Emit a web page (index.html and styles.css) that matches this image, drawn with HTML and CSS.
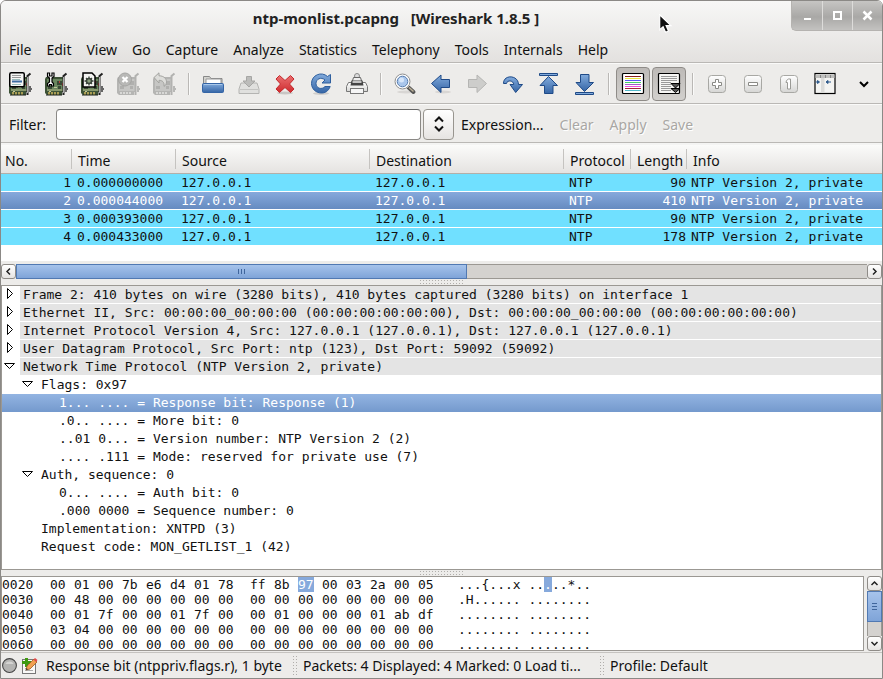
FILE: index.html
```html
<!DOCTYPE html>
<html lang="en">
<head>
  <meta charset="UTF-8" />
  <meta name="viewport" content="width=device-width, initial-scale=1.0" />
  <title>ntp-monlist.pcapng [Wireshark 1.8.5 ]</title>
  <link rel="stylesheet" href="styles.css">
</head>
<body>
  <!-- shared icon parts -->
  <svg class="defs" aria-hidden="true">
    <defs>
      <linearGradient id="blue" x1="0" y1="0" x2="0" y2="1">
        <stop offset="0" stop-color="#82abdc" />
        <stop offset="1" stop-color="#3565a6" />
      </linearGradient>
      <linearGradient id="red" x1="0" y1="0" x2="0" y2="1">
        <stop offset="0" stop-color="#ea7070" />
        <stop offset="1" stop-color="#cf2b2f" />
      </linearGradient>
      <linearGradient id="metal" x1="0" y1="0" x2="0" y2="1">
        <stop offset="0" stop-color="#ffffff" />
        <stop offset="1" stop-color="#d6d6d4" />
      </linearGradient>
      <symbol id="nic" viewBox="0 0 24 24">
        <path d="M1 5h18v15h-2v3H2l-2-2V7z" fill="#3c5236" />
        <path d="M2 7h16v12H2z" fill="#6a875f" />
        <path d="M2 17h16v2H2z" fill="#87986c" />
        <path d="M12 9h5v4h-5zM3 14h4v3H3zM13 14h3v3h-3z" fill="#3a4a36" />
        <path d="M14 9h1v2h-1zM17 11h1v3h-1z" fill="#b8423c" />
        <path d="M9 15h3v1H9zM4 19h2v1H4z" fill="#c3c79a" />
        <path d="M3 20h2v3H3zM6 20h2v3H6zM9 20h2v3H9zM12 20h2v3h-2z" fill="#a99d55" />
        <path d="M1 22.500h16v1H1z" fill="#1b2018" />
        <path d="M18.500 23V4l3-2.500" fill="none" stroke="#222" stroke-width="2" />
        <path d="M18.500 21V5" stroke="#aaa" stroke-width="1" />
        <path d="M20 17h3M21 14v6" stroke="#666" stroke-width="2" />
      </symbol>
      <symbol id="nic-off" viewBox="0 0 24 24">
        <path d="M1 5h18v15h-2v3H2l-2-2V7z" fill="#b5b5b3" />
        <path d="M2 7h16v12H2z" fill="#c6c6c4" />
        <path d="M12 9h5v4h-5zM3 14h4v3H3zM13 14h3v3h-3z" fill="#b0b0ae" />
        <path d="M3 20h2v2H3zM6 20h2v2H6zM9 20h2v2H9zM12 20h2v2h-2z" fill="#d8d8d6" />
        <path d="M18.500 23V4l3-2.500" fill="none" stroke="#b2b2b0" stroke-width="2" />
        <path d="M20 17h3M21 14v6" stroke="#b8b8b6" stroke-width="2" />
      </symbol>
    </defs>
  </svg>

  <div class="window">
    <header class="chrome">
      <div class="titlebar">
        <h1>ntp-monlist.pcapng &nbsp; [Wireshark 1.8.5 ]</h1>
        <div class="window-buttons">
          <button type="button" aria-label="Minimize"><svg width="11" height="11"><path d="M2 9h7" stroke="#fff" stroke-width="2" /></svg></button>
          <button type="button" aria-label="Maximize"><svg width="11" height="11"><path d="M2 2h7v7H2z" fill="none" stroke="#fff" stroke-width="2" /></svg></button>
          <button type="button" aria-label="Close"><svg width="11" height="11"><path d="M1.500 1.500l8 8M9.500 1.500l-8 8" stroke="#fff" stroke-width="2.500" /></svg></button>
        </div>
        <svg class="cursor" width="14" height="20" viewBox="0 0 14 20" aria-hidden="true"><path d="M.7.7v15l3.400-3 2.400 5.600 3-1.300-2.400-5.400h4.800z" fill="#111" stroke="#fff" stroke-width="1.200" /></svg>
      </div>
      <nav class="menubar">
        <a href="#">File</a>
        <a href="#">Edit</a>
        <a href="#">View</a>
        <a href="#">Go</a>
        <a href="#">Capture</a>
        <a href="#">Analyze</a>
        <a href="#">Statistics</a>
        <a href="#">Telephony</a>
        <a href="#">Tools</a>
        <a href="#">Internals</a>
        <a href="#">Help</a>
      </nav>
    </header>

    <div class="toolbar" role="toolbar" aria-label="Main toolbar">
      <button type="button" aria-label="List interfaces">
        <svg viewBox="0 0 24 24"><use href="#nic" /><rect x=".75" y=".75" width="14.500" height="14" rx="1.500" fill="#f6f6f4" stroke="#000" stroke-width="1.500" /><path d="M3 3.500h9M3 5.500h9" stroke="#999" /><path d="M3 9.500h10" stroke="#3e6da3" stroke-width="2" /><path d="M3 7.500h8M3 12.500h9" stroke="#9bb" /></svg>
      </button>
      <button type="button" aria-label="Capture options">
        <svg viewBox="0 0 24 24"><use href="#nic" /><path d="M2.500 1v3.500l2 1.500v4l-2 1.500V14h2v-1.500h2V14h2v-2.500L7 10V6l2-1.500V1H7v3H4.500V1z" fill="#fff" stroke="#000" stroke-width="1.200" /></svg>
      </button>
      <button type="button" aria-label="Start capture">
        <svg viewBox="0 0 24 24"><use href="#nic" /><path d="M2 1h9l3 3v11H2z" fill="#f4f4f2" stroke="#000" stroke-width="1.500" /><path d="M8 4.500v9M3.500 9h9M5 6l6 6M11 6l-6 6" stroke="#3b453b" stroke-width="1.300" /><circle cx="8" cy="9" r="2.500" fill="#8ca080" stroke="#3b453b" stroke-width="1.500" /></svg>
      </button>
      <button type="button" aria-label="Stop capture" disabled>
        <svg viewBox="0 0 24 24"><use href="#nic-off" /><circle cx="8" cy="7.500" r="6.500" fill="#b8b8b6" stroke="#a5a5a3" /><path d="M5.500 5l5 5M10.500 5l-5 5" stroke="#fff" stroke-width="2.200" /></svg>
      </button>
      <button type="button" aria-label="Restart capture" disabled>
        <svg viewBox="0 0 24 24"><use href="#nic-off" /><path d="M1 5.500L6 .8v3c5 0 7.500 3 7.500 6 0 2-1 4-2.500 4.500.5-4-1.500-6-5-6V11z" fill="#ddddda" stroke="#a2a29f" /></svg>
      </button>
      <span class="separator"></span>
      <button type="button" aria-label="Open">
        <svg viewBox="0 0 24 24"><path d="M2.500 12V4.500h6l1.500 2h11V12" fill="#d4d4d0" stroke="#888" /><path d="M5 12V7h15v5" fill="#fff" stroke="#999" /><rect x="1.500" y="11.500" width="21" height="9" rx="1" fill="url(#blue)" stroke="#3565a6" /><path d="M3 12.500h18" stroke="#a9c8ea" /></svg>
      </button>
      <button type="button" aria-label="Save as" disabled>
        <svg viewBox="0 0 24 24"><path d="M4 11h16l2 6v4.500H2V17z" fill="#e0e0de" stroke="#b4b4b2" /><path d="M3 17.500h18" stroke="#c4c4c2" /><path d="M9.500 4.500h5V9h3.500l-6 6-6-6h3.500z" fill="#bcbcba" stroke="#a6a6a4" /></svg>
      </button>
      <button type="button" aria-label="Close file">
        <svg viewBox="0 0 24 24"><ellipse cx="12" cy="21" rx="8" ry="1.500" fill="#c8c6c4" /><path d="M6.500 3.500L12 8.500l5.500-5L21 7l-4.500 5 4.500 5-3.500 3.500-5.500-5-5.500 5L3 17l4.500-5L3 7z" fill="url(#red)" stroke="#c4282c" stroke-linejoin="round" /></svg>
      </button>
      <button type="button" aria-label="Reload">
        <svg viewBox="0 0 24 24"><ellipse cx="12" cy="21.500" rx="8" ry="1.500" fill="#cfcdcb" /><path d="M21.500 2.500V11h-8.500l3-3c-4-3.500-9-1-9 3.500 0 5 6 6.500 9 3h5.200c-2 5-5.200 6.500-8.700 6.500-6 0-10-4.500-10-9.500 0-8.500 10-12.500 16-7z" fill="url(#blue)" stroke="#2f5f9e" /></svg>
      </button>
      <button type="button" aria-label="Print">
        <svg viewBox="0 0 24 24"><circle cx="12" cy="4" r="2.500" fill="#ddd" stroke="#888" /><path d="M6.500 12l2-6.500h7l2 6.500" fill="#eee" stroke="#666" /><path d="M3.500 10.500h17l2 4v5h-21v-5z" fill="url(#metal)" stroke="#777" /><path d="M6.500 8.500h11l1 5h-13z" fill="#444" /><path d="M7.500 10h9M5 16h14" stroke="#eee" stroke-width="1.500" /><rect x="5.500" y="16.500" width="13" height="5" fill="#f6f6f6" stroke="#777" /></svg>
      </button>
      <span class="separator"></span>
      <button type="button" aria-label="Find packet">
        <svg viewBox="0 0 24 24"><ellipse cx="13" cy="20" rx="9" ry="1.500" fill="#d8d6d4" /><path d="M15 15l5.500 5" stroke="#555" stroke-width="4" stroke-linecap="round" /><path d="M16 15.500l4.500 4" stroke="#bbb098" stroke-width="1.500" /><circle cx="9.500" cy="9.500" r="6.500" fill="#a9c6ec" stroke="#fff" stroke-width="3" /><circle cx="9.500" cy="9.500" r="7.500" fill="none" stroke="#888" /><circle cx="9.500" cy="9.500" r="5.300" fill="none" stroke="#4d76ac" /><circle cx="8.500" cy="8" r="2.500" fill="#d8e7fa" /></svg>
      </button>
      <button type="button" aria-label="Go back">
        <svg viewBox="0 0 24 24"><ellipse cx="14" cy="20" rx="8" ry="1.500" fill="#d8d6d4" /><path d="M2.500 11.500l9.500-8.500v4.500h8.500v8H12v5z" fill="url(#blue)" stroke="#1f4a87" /></svg>
      </button>
      <button type="button" aria-label="Go forward" disabled>
        <svg viewBox="0 0 24 24"><path d="M21.500 11.500L12 3v4.500H3.500v8H12v5z" fill="#cdcdcb" stroke="#b5b5b3" /></svg>
      </button>
      <button type="button" aria-label="Go to packet">
        <svg viewBox="0 0 24 24"><path d="M2.500 11.500C2.500 2 17.500 3 17.500 12.500h4L14.700 20.500 9 12.500h3.700c0-4-6.500-5-7.200-1z" fill="url(#blue)" stroke="#1f4a87" /></svg>
      </button>
      <button type="button" aria-label="First packet">
        <svg viewBox="0 0 24 24"><path d="M2.500 1.500h18v2h-18z" fill="#82abdc" stroke="#1f4a87" /><path d="M11.500 4.500l9 9h-4.500v8H7.500v-8H3z" fill="url(#blue)" stroke="#1f4a87" /></svg>
      </button>
      <button type="button" aria-label="Last packet">
        <svg viewBox="0 0 24 24"><path d="M2.500 20.500h18v2h-18z" fill="#82abdc" stroke="#1f4a87" /><path d="M11.500 19.500l9-9h-4.500v-8H7.500v8H3z" fill="url(#blue)" stroke="#1f4a87" /></svg>
      </button>
      <span class="separator"></span>
      <button type="button" class="pressed" aria-pressed="true" aria-label="Colorize packet list">
        <svg viewBox="0 0 24 24"><rect x="1.500" y="1.500" width="21" height="20" rx="1" fill="#fff" stroke="#000" stroke-width="1.200" /><path d="M4 4.500h16" stroke="#8b2020" /><path d="M4 6.500h16" stroke="#e8e23c" /><path d="M4 8.500h16" stroke="#5a5af0" /><path d="M4 10.500h16" stroke="#46d066" /><path d="M4 12.500h16" stroke="#a060c8" /><path d="M4 14.500h16" stroke="#f050e0" /><path d="M4 16.500h16" stroke="#a02838" /><path d="M4 18.500h16" stroke="#50b8c8" /></svg>
      </button>
      <button type="button" class="pressed" aria-pressed="true" aria-label="Auto scroll">
        <svg viewBox="0 0 24 24"><rect x="1.500" y="1.500" width="21" height="20" rx="1" fill="#f6f6f4" stroke="#000" stroke-width="1.200" /><path d="M4 4.500h16M4 6.500h16M4 8.500h16M4 10.500h10M4 12.500h10M4 14.500h10M4 16.500h10M4 18.500h10" stroke="#999" /><path d="M14 11.500h9l-4.500 4.500zM14 16.500h9l-4.500 4z" fill="#555" stroke="#000" /></svg>
      </button>
      <span class="separator"></span>
      <button type="button" aria-label="Zoom in">
        <svg viewBox="0 0 24 24"><rect x="3.500" y="3.500" width="17" height="17" rx="3" fill="url(#metal)" stroke="#a8a8a4" /><path d="M10.500 7.500h3v3h3v3h-3v3h-3v-3h-3v-3h3z" fill="#fff" stroke="#8a8a86" /></svg>
      </button>
      <button type="button" aria-label="Zoom out">
        <svg viewBox="0 0 24 24"><rect x="3.500" y="3.500" width="17" height="17" rx="3" fill="url(#metal)" stroke="#a8a8a4" /><path d="M7.500 10.500h9v3h-9z" fill="#fff" stroke="#8a8a86" /></svg>
      </button>
      <button type="button" aria-label="Normal size">
        <svg viewBox="0 0 24 24"><rect x="3.500" y="3.500" width="17" height="17" rx="3" fill="url(#metal)" stroke="#a8a8a4" /><path d="M9.500 8.500l2-1.500h2v10h-3v-6.500h-1.500z" fill="#fff" stroke="#9a9a96" /></svg>
      </button>
      <button type="button" aria-label="Resize columns">
        <svg viewBox="0 0 24 24"><rect x="2" y="1.500" width="20" height="20" fill="#f4f4f2" stroke="#000" stroke-width="1.200" /><path d="M2.500 2.500h19V6h-19z" fill="#c0c0be" /><path d="M7.500 3v3M12.500 3v3M17.500 3v3" stroke="#888" /><path d="M8 6h3.500v15H8z" fill="#dcdcda" /><path d="M2.500 10h3M18 10h-3M4.500 8.500L6.500 10l-2 1.500zM15 8.500L13 10l2 1.500z" fill="#2f5a8c" stroke="#2f5a8c" /></svg>
      </button>
      <button type="button" class="overflow" aria-label="More tools">
        <svg viewBox="0 0 24 24"><path d="M8 10l4 4 4-4" fill="none" stroke="#000" stroke-width="2" /></svg>
      </button>
    </div>

    <form class="filterbar">
      <label for="filter">Filter:</label>
      <input type="text" id="filter" name="filter" />
      <button type="button" class="combo" aria-label="Recent filters">
        <svg width="12" height="16"><path d="M2 5.500l4-4 4 4M2 10.500l4 4 4-4" fill="none" stroke="#111" stroke-width="2" /></svg>
      </button>
      <button type="button" class="flat">Expression...</button>
      <button type="reset" class="flat" disabled>Clear</button>
      <button type="submit" class="flat" disabled>Apply</button>
      <button type="button" class="flat" disabled>Save</button>
    </form>

    <main class="panes">
      <section class="packets" aria-label="Packet list">
        <table>
          <colgroup>
            <col class="col-no" />
            <col class="col-time" />
            <col class="col-addr" />
            <col class="col-addr" />
            <col class="col-proto" />
            <col class="col-length" />
            <col />
          </colgroup>
          <thead>
            <tr><th>No.</th><th>Time</th><th>Source</th><th>Destination</th><th>Protocol</th><th>Length</th><th>Info</th></tr>
          </thead>
          <tbody>
            <tr><td class="num">1</td><td>0.000000000</td><td>127.0.0.1</td><td>127.0.0.1</td><td>NTP</td><td class="num">90</td><td>NTP Version 2, private</td></tr>
            <tr class="selected"><td class="num">2</td><td>0.000044000</td><td>127.0.0.1</td><td>127.0.0.1</td><td>NTP</td><td class="num">410</td><td>NTP Version 2, private</td></tr>
            <tr><td class="num">3</td><td>0.000393000</td><td>127.0.0.1</td><td>127.0.0.1</td><td>NTP</td><td class="num">90</td><td>NTP Version 2, private</td></tr>
            <tr><td class="num">4</td><td>0.000433000</td><td>127.0.0.1</td><td>127.0.0.1</td><td>NTP</td><td class="num">178</td><td>NTP Version 2, private</td></tr>
          </tbody>
        </table>
      </section>

      <div class="scroll-x">
        <button type="button" aria-label="Scroll left"><svg width="7" height="9"><path d="M5 1.500l-3 3 3 3" fill="none" stroke="#222" stroke-width="1.500" /></svg></button>
        <div class="track"><div class="thumb"><i></i><i></i><i></i></div></div>
        <button type="button" aria-label="Scroll right"><svg width="7" height="9"><path d="M2 1.500l3 3-3 3" fill="none" stroke="#222" stroke-width="1.500" /></svg></button>
      </div>
      <div class="handle"></div>

      <ul class="details">
        <li class="proto"><svg class="arrow"><path d="M5.500 2.500v10l5-5z" /></svg><span>Frame 2: 410 bytes on wire (3280 bits), 410 bytes captured (3280 bits) on interface 1</span></li>
        <li class="proto"><svg class="arrow"><path d="M5.500 2.500v10l5-5z" /></svg><span>Ethernet II, Src: 00:00:00_00:00:00 (00:00:00:00:00:00), Dst: 00:00:00_00:00:00 (00:00:00:00:00:00)</span></li>
        <li class="proto"><svg class="arrow"><path d="M5.500 2.500v10l5-5z" /></svg><span>Internet Protocol Version 4, Src: 127.0.0.1 (127.0.0.1), Dst: 127.0.0.1 (127.0.0.1)</span></li>
        <li class="proto"><svg class="arrow"><path d="M5.500 2.500v10l5-5z" /></svg><span>User Datagram Protocol, Src Port: ntp (123), Dst Port: 59092 (59092)</span></li>
        <li class="proto"><svg class="arrow"><path d="M2.500 5.500h10l-5 5z" /></svg><span>Network Time Protocol (NTP Version 2, private)</span></li>
        <li class="level-1"><svg class="arrow"><path d="M2.500 5.500h10l-5 5z" /></svg><span>Flags: 0x97</span></li>
        <li class="level-3 selected"><span>1... .... = Response bit: Response (1)</span></li>
        <li class="level-3"><span>.0.. .... = More bit: 0</span></li>
        <li class="level-3"><span>..01 0... = Version number: NTP Version 2 (2)</span></li>
        <li class="level-3"><span>.... .111 = Mode: reserved for private use (7)</span></li>
        <li class="level-1"><svg class="arrow"><path d="M2.500 5.500h10l-5 5z" /></svg><span>Auth, sequence: 0</span></li>
        <li class="level-3"><span>0... .... = Auth bit: 0</span></li>
        <li class="level-3"><span>.000 0000 = Sequence number: 0</span></li>
        <li class="level-2"><span>Implementation: XNTPD (3)</span></li>
        <li class="level-2"><span>Request code: MON_GETLIST_1 (42)</span></li>
      </ul>
      <div class="handle"></div>

      <section class="bytes" aria-label="Packet bytes">
        <div class="dump">
          <table>
            <tr><th>0020</th><td>00</td><td>01</td><td>00</td><td>7b</td><td>e6</td><td>d4</td><td>01</td><td class="mid">78</td><td>ff</td><td>8b</td><td><mark>97</mark></td><td>00</td><td>03</td><td>2a</td><td>00</td><td>05</td><td class="ascii">...{...x ..<mark>.</mark>..*..</td></tr>
            <tr><th>0030</th><td>00</td><td>48</td><td>00</td><td>00</td><td>00</td><td>00</td><td>00</td><td class="mid">00</td><td>00</td><td>00</td><td>00</td><td>00</td><td>00</td><td>00</td><td>00</td><td>00</td><td class="ascii">.H...... ........</td></tr>
            <tr><th>0040</th><td>00</td><td>01</td><td>7f</td><td>00</td><td>00</td><td>01</td><td>7f</td><td class="mid">00</td><td>00</td><td>01</td><td>00</td><td>00</td><td>00</td><td>01</td><td>ab</td><td>df</td><td class="ascii">........ ........</td></tr>
            <tr><th>0050</th><td>03</td><td>04</td><td>00</td><td>00</td><td>00</td><td>00</td><td>00</td><td class="mid">00</td><td>00</td><td>00</td><td>00</td><td>00</td><td>00</td><td>00</td><td>00</td><td>00</td><td class="ascii">........ ........</td></tr>
            <tr><th>0060</th><td>00</td><td>00</td><td>00</td><td>00</td><td>00</td><td>00</td><td>00</td><td class="mid">00</td><td>00</td><td>00</td><td>00</td><td>00</td><td>00</td><td>00</td><td>00</td><td>00</td><td class="ascii">........ ........</td></tr>
          </table>
        </div>
        <div class="scroll-y">
          <button type="button" aria-label="Scroll up"><svg width="9" height="7"><path d="M1.500 5l3-3 3 3" fill="none" stroke="#222" stroke-width="1.500" /></svg></button>
          <div class="track"><div class="thumb"><i></i><i></i><i></i></div></div>
          <button type="button" aria-label="Scroll down"><svg width="9" height="7"><path d="M1.500 2l3 3 3-3" fill="none" stroke="#222" stroke-width="1.500" /></svg></button>
        </div>
      </section>
    </main>

    <footer class="statusbar">
      <svg width="17" height="17" viewBox="0 0 16 16"><circle cx="8" cy="8" r="6.500" fill="#b4b4b2" stroke="#444" /><path d="M4 6.500a4.500 4 0 0 1 8 0z" fill="#d4d4d2" /></svg>
      <svg width="18" height="18" viewBox="0 0 18 18"><rect x="2.500" y="2.500" width="13" height="14" fill="#f8f8f6" stroke="#777" /><path d="M5 13.500h8M5 11.500h3" stroke="#aaa" /><path d="M5 1h3v3h3v3H8v3H5V7H2V4h3z" fill="#3f9a10" /><path d="M6 13l1-4 7-7 3 3-7 7z" fill="#f0a050" stroke="#a0581c" stroke-width=".8" /><path d="M13.500 2.500l1.500-1.500 2.500 2-1.500 2z" fill="#e04848" /><path d="M6 13l.5-2 1.500 1.500z" fill="#333" /></svg>
      <span class="field-info">Response bit (ntppriv.flags.r), 1 byte</span>
      <span class="grip"></span>
      <span class="packet-info">Packets: 4 Displayed: 4 Marked: 0 Load ti...</span>
      <span class="grip"></span>
      <span>Profile: Default</span>
    </footer>
  </div>
</body>
</html>
```
FILE: styles.css
```css
* { box-sizing: border-box; }
body {
  margin: 0;
  background: #fff;
  color: #111;
  font-family: "Noto Sans", sans-serif;
  font-size: 14px;
}
button {
  padding: 0;
  border: none;
  background: none;
  font: inherit;
  color: inherit;
}
svg { display: block; flex: none; }
.defs {
  position: absolute;
  width: 0;
  height: 0;
}
.window {
  display: flex;
  flex-direction: column;
  min-height: 100vh;
  border: 1px solid #8b8986;
  border-radius: 6px 6px 0 0;
  background: #edecea;
  overflow: hidden;
}

/* title and menu */
.chrome {
  background: linear-gradient(#f7f7f6, #e3e1df);
  border-bottom: 1px solid #bab8b5;
}
.titlebar {
  position: relative;
  display: flex;
  align-items: flex-start;
  height: 36px;
}
.titlebar h1 {
  flex: 1;
  margin: 0;
  font-size: 15px;
  line-height: 34px;
  text-align: center;
  color: #222;
}
.window-buttons {
  display: flex;
  border: 1px solid #b5b3b0;
  border-width: 0 0 1px 1px;
  border-radius: 0 0 0 5px;
  background: linear-gradient(#c6c5c3, #a9a8a6 55%, #c3c2c0);
}
.window-buttons button {
  display: flex;
  align-items: center;
  justify-content: center;
  width: 30px;
  height: 29px;
}
.window-buttons button + button { border-left: 1px solid #dddcda; }
.cursor {
  position: absolute;
  right: 209px;
  top: 13px;
}
.menubar {
  display: flex;
  gap: 15px;
  padding: 0 8px;
  line-height: 25px;
}
.menubar a {
  color: #111;
  text-decoration: none;
}

/* main toolbar */
.toolbar {
  display: flex;
  align-items: center;
  height: 41px;
  padding: 1px 0 0 2px;
  border-top: 1px solid #fafaf9;
  border-bottom: 1px solid #bab8b5;
}
.toolbar button {
  display: flex;
  align-items: center;
  justify-content: center;
  flex: none;
  width: 34px;
  height: 34px;
  margin: 0 1px;
}
.toolbar button svg {
  width: 24px;
  height: 24px;
}
.toolbar .overflow { margin-left: auto; }
.toolbar .pressed {
  border: 1px solid #8f8c88;
  border-radius: 4px;
  background: linear-gradient(#bdbab7, #d2d0cd);
}
.separator {
  width: 2px;
  height: 22px;
  margin: 0 5px;
  border-left: 1px solid #bab8b5;
  border-right: 1px solid #fafaf9;
}

/* display filter */
.filterbar {
  display: flex;
  align-items: center;
  height: 39px;
  padding: 1px 8px 0;
  border-top: 1px solid #fafaf9;
  border-bottom: 1px solid #bab8b5;
}
.filterbar label { width: 47px; }
.filterbar input {
  width: 365px;
  height: 31px;
  padding: 0 6px;
  border: 1px solid #8b8986;
  border-top-color: #666;
  border-radius: 4px;
  background: #fff;
  font: inherit;
}
.filterbar .combo {
  display: flex;
  align-items: center;
  justify-content: center;
  width: 31px;
  height: 31px;
  margin: 0 7px 0 2px;
  border: 1px solid #98958f;
  border-radius: 4px;
  background: linear-gradient(#fff, #e6e4e2);
}
.filterbar .flat { margin-right: 16px; }
.filterbar .flat:disabled {
  color: #a9a7a4;
  text-shadow: 1px 1px 0 #fff;
}

.panes {
  display: flex;
  flex-direction: column;
  flex: 1;
}

/* packet list */
.packets {
  height: 118px;
  margin-bottom: 3px;
  border-top: 2px solid #f4f4f3;
  background: #fff;
  overflow: hidden;
}
.packets table {
  width: 100%;
  table-layout: fixed;
  border-collapse: separate;
  border-spacing: 0;
}
.col-no { width: 71px; }
.col-time { width: 104px; }
.col-addr { width: 194px; }
.col-proto { width: 67px; }
.col-length { width: 56px; }
.packets thead tr { background: linear-gradient(#fbfbfa, #e4e2e0); }
.packets th {
  height: 29px;
  padding: 2px 0 0 6px;
  border-bottom: 1px solid #b3afa9;
  font-weight: normal;
  text-align: left;
  background: linear-gradient(#c5c3c0, #c5c3c0) right center / 1px 20px no-repeat;
}
.packets th:first-child { padding-left: 4px; }
.packets th:last-child { background: none; }
.packets tbody tr { background: #70e0ff; }
.packets tbody .selected {
  background: linear-gradient(#86a9dc, #6489bf);
  color: #fff;
}
.packets td {
  height: 18px;
  padding: 0 0 0 5px;
  border-bottom: 1px solid #fff;
  font: 13px/17px "DejaVu Sans Mono", monospace;
  white-space: nowrap;
}
.packets td:last-child { padding-left: 4px; }
.packets .num {
  padding-right: 1px;
  text-align: right;
}

/* scrollbars and pane handles */
.scroll-x,
.scroll-y { display: flex; }
.scroll-x { height: 15px; }
.scroll-y {
  flex-direction: column;
  width: 15px;
}
.scroll-x button,
.scroll-y button {
  display: flex;
  align-items: center;
  justify-content: center;
  width: 15px;
  height: 15px;
  border: 1px solid #8f8c88;
  border-radius: 3px;
  background: linear-gradient(#fff, #e6e4e2);
}
.track {
  flex: 1;
  background: #d4d2cf;
  border: 1px solid #9b9893;
}
.scroll-x .track { border-width: 1px 0; }
.scroll-y .track { border-width: 0 1px; }
.thumb {
  display: flex;
  align-items: center;
  justify-content: center;
  gap: 2px;
  border: 1px solid #5179b2;
  background: linear-gradient(#a6c3eb, #7fa4d8);
}
.scroll-x .thumb {
  width: 53%;
  height: 15px;
  margin-top: -1px;
}
.scroll-y .thumb {
  flex-direction: column;
  width: 15px;
  height: 31px;
  margin-left: -1px;
}
.thumb i {
  width: 1px;
  height: 5px;
  background: #3f659c;
}
.scroll-y .thumb i {
  width: 5px;
  height: 1px;
}
.handle {
  width: 46px;
  height: 6px;
  margin: 0 auto;
  background: radial-gradient(circle, #b0aeab 1px, transparent 1px) 0 0 / 3px 3px;
}

/* packet details */
.details {
  flex: 1;
  margin: 0;
  padding: 0;
  border: 1px solid #9b9893;
  background: #fff;
  list-style: none;
  font: 13px/17px "DejaVu Sans Mono", monospace;
  white-space: nowrap;
}
.details li {
  display: flex;
  height: 18px;
}
.arrow {
  width: 18px;
  height: 18px;
  fill: #fff;
  stroke: #000;
}
.details span { padding-left: 3px; }
.details .proto span {
  flex: 1;
  margin-bottom: 1px;
  background: #e4e4e4;
}
.details .level-1 { padding-left: 18px; }
.details .level-2 { padding-left: 36px; }
.details .level-3 { padding-left: 54px; }
.details .selected {
  background: linear-gradient(#93b4e2, #7499cd);
  color: #fff;
}

/* packet bytes */
.bytes {
  display: flex;
  gap: 3px;
  height: 75px;
}
.dump {
  flex: 1;
  border: 1px solid #9b9893;
  background: #fff;
  overflow: hidden;
}
.dump table {
  border-collapse: collapse;
  font: 13px/15px "DejaVu Sans Mono", monospace;
}
.dump th {
  width: 48px;
  padding: 0;
  font-weight: normal;
  text-align: left;
}
.dump td {
  width: 24px;
  padding: 0;
}
.dump .mid { width: 32px; }
.dump .ascii {
  width: auto;
  padding-left: 16px;
}
.dump mark {
  background: #86a9dc;
  color: #fff;
}

.statusbar {
  display: flex;
  align-items: center;
  height: 26px;
  margin-top: 1px;
  border-top: 1px solid #c5c3c0;
}
.statusbar svg + svg { margin: 0 8px 0 2px; }
.field-info { width: 246px; }
.packet-info { width: 296px; }
.grip {
  width: 5px;
  height: 22px;
  margin-right: 6px;
  background: radial-gradient(circle, #b0aeab 1px, transparent 1px) 0 0 / 3px 3px;
}
```
